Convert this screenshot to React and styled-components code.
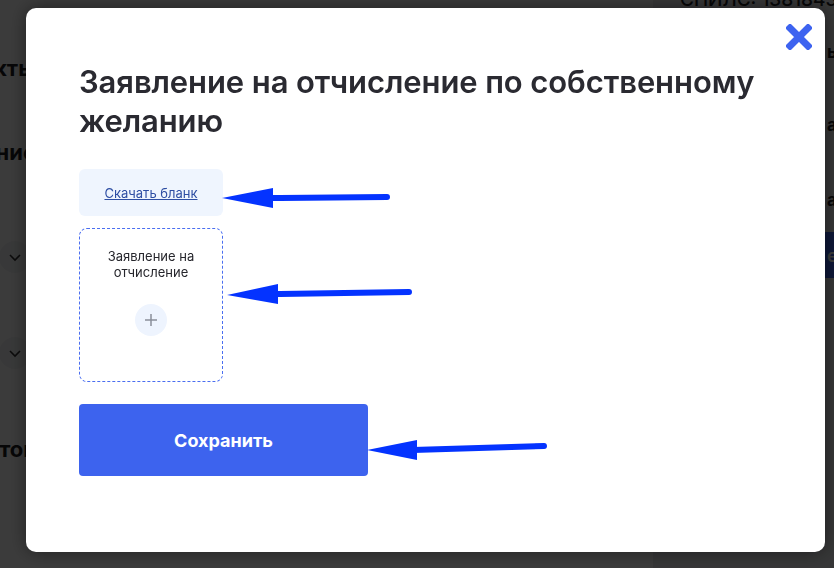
import React from "react";
import styled, { createGlobalStyle } from "styled-components";

const Global = createGlobalStyle`
  html, body { margin: 0; padding: 0; }
  body { font-family: Inter, "Noto Sans", sans-serif; background: #fff; overflow: hidden; }
  * { box-sizing: border-box; }
`;

const Page = styled.div`
  display: flex;
  width: 834px;
  height: 568px;
  overflow: hidden;
`;

const Main = styled.div`
  flex: 1;
  padding-top: 55px;
  background: #fff;
`;

const MainInner = styled.div`
  display: flex;
  flex-direction: column;
  align-items: flex-end;
  width: 36px;
`;

const BgHeading = styled.div`
  font-weight: 700;
  font-size: 22px;
  line-height: 27px;
  color: #1c1c22;
  margin-top: ${(p) => p.$mt || 0}px;
  white-space: nowrap;
`;

const BgCircle = styled.div`
  width: 32px;
  height: 32px;
  border-radius: 50%;
  background: #f2f3f5;
  display: flex;
  align-items: center;
  justify-content: center;
  margin-top: ${(p) => p.$mt || 0}px;
  margin-right: 5px;
`;

const Sidebar = styled.div`
  width: 181px;
  background: #e9eaed;
  display: flex;
  flex-direction: column;
  padding-left: 27px;
  overflow: hidden;
`;

const Snils = styled.div`
  font-size: 19px;
  line-height: 24px;
  font-weight: 500;
  color: #1c1c22;
  margin-top: -12px;
  white-space: nowrap;
`;

const SideText = styled.div`
  font-size: 17px;
  line-height: 20px;
  font-weight: 700;
  color: #1c1c22;
  margin-top: ${(p) => p.$mt}px;
  padding-left: 147px;
  white-space: nowrap;
`;

const SideBtn = styled.div`
  margin: 22px 0 0 144px;
  height: 46px;
  background: #3d63ee;
  color: #fff;
  font-size: 18px;
  font-weight: 600;
  display: flex;
  align-items: center;
  padding-left: 3px;
  white-space: nowrap;
`;

const Overlay = styled.div`
  position: fixed;
  inset: 0;
  background: rgba(0, 0, 0, 0.77);
  padding: 8px 9px 16px 26px;
  display: flex;
`;

const Modal = styled.div`
  position: relative;
  width: 799px;
  height: 544px;
  background: #fff;
  border-radius: 10px;
  box-shadow: 0 0 18px rgba(0, 0, 0, 0.45);
  padding: 54px 53px 0 53px;
  display: flex;
  flex-direction: column;
  align-items: flex-start;
`;

const CloseBtn = styled.button`
  position: absolute;
  top: 16px;
  right: 13px;
  width: 26px;
  height: 26px;
  padding: 0;
  border: none;
  background: none;
  display: flex;
  align-items: center;
  justify-content: center;
  cursor: pointer;
`;

const Title = styled.h2`
  margin: 0;
  font-family: Inter, sans-serif;
  font-size: 31px;
  line-height: 39px;
  font-weight: 600;
  color: #2a2a31;
  max-width: 700px;
  letter-spacing: -0.1px;
`;

const DownloadBox = styled.div`
  margin-top: 29px;
  width: 144px;
  height: 47px;
  background: #eff5fe;
  border-radius: 6px;
  display: flex;
  align-items: center;
  justify-content: center;
`;

const DownloadLink = styled.a`
  font-size: 13px;
  color: #2e4ea3;
  text-decoration: underline;
  cursor: pointer;
`;

const UploadBox = styled.div`
  margin-top: 12px;
  width: 144px;
  height: 154px;
  border: 1px dashed #4a6ef0;
  border-radius: 8px;
  display: flex;
  flex-direction: column;
  align-items: center;
  padding-top: 19px;
`;

const UploadLabel = styled.div`
  font-size: 13px;
  line-height: 16px;
  color: #26262c;
  text-align: center;
`;

const PlusCircle = styled.div`
  margin-top: 24px;
  width: 32px;
  height: 32px;
  border-radius: 50%;
  background: #eef4fe;
  display: flex;
  align-items: center;
  justify-content: center;
`;

const SaveButton = styled.button`
  margin-top: 22px;
  width: 289px;
  height: 72px;
  border: none;
  border-radius: 4px;
  background: #3d63ee;
  color: #fff;
  font-family: Inter, sans-serif;
  font-size: 18px;
  font-weight: 700;
  cursor: pointer;
`;

const Annotations = styled.svg`
  position: absolute;
  left: 0;
  top: 0;
  width: 799px;
  height: 544px;
  pointer-events: none;
`;

function Arrow({ tip, base, end, half }) {
  const [tx, ty] = tip;
  const [bx, by] = base;
  return (
    <g fill="#0433ff" stroke="#0433ff">
      <line x1={bx - 4} y1={by} x2={end[0]} y2={end[1]} strokeWidth="6" strokeLinecap="round" />
      <polygon points={`${tx},${ty} ${bx},${by - half} ${bx},${by + half}`} strokeWidth="0" />
    </g>
  );
}

const Chevron = () => (
  <svg width="14" height="14" viewBox="0 0 14 14">
    <path d="M2 5l5 5 5-5" fill="none" stroke="#333" strokeWidth="1.6" />
  </svg>
);

export default function App() {
  const ox = 26;
  const oy = 8;
  const p = (x, y) => [x - ox, y - oy];
  return (
    <>
      <Global />
      <Page>
        <Main>
          <MainInner>
            <BgHeading>Контакты</BgHeading>
            <BgHeading $mt={57}>Обучение</BgHeading>
            <BgCircle $mt={75}>
              <Chevron />
            </BgCircle>
            <BgCircle $mt={64}>
              <Chevron />
            </BgCircle>
            <BgHeading $mt={67}>Документов</BgHeading>
          </MainInner>
        </Main>
        <Sidebar>
          <Snils>СНИЛС: 13818436</Snils>
          <SideText $mt={30}>ы</SideText>
          <SideText $mt={53}>а</SideText>
          <SideText $mt={55}>а</SideText>
          <SideBtn>е</SideBtn>
        </Sidebar>
      </Page>
      <Overlay>
        <Modal>
          <CloseBtn aria-label="Закрыть">
            <svg width="26" height="26" viewBox="0 0 26 26">
              <path d="M4 4L22 22M22 4L4 22" stroke="#3d63f0" strokeWidth="7" strokeLinecap="square" />
            </svg>
          </CloseBtn>
          <Title>Заявление на отчисление по собственному желанию</Title>
          <DownloadBox>
            <DownloadLink>Скачать бланк</DownloadLink>
          </DownloadBox>
          <UploadBox>
            <UploadLabel>
              Заявление на
              <br />
              отчисление
            </UploadLabel>
            <PlusCircle>
              <svg width="14" height="14" viewBox="0 0 14 14">
                <path d="M7 1v12M1 7h12" stroke="#8a8e9a" strokeWidth="1.5" />
              </svg>
            </PlusCircle>
          </UploadBox>
          <SaveButton>Сохранить</SaveButton>
          <Annotations viewBox="0 0 799 544">
            <Arrow tip={p(222, 198)} base={p(273, 198)} end={p(387, 197)} half={10} />
            <Arrow tip={p(227, 295)} base={p(278, 294)} end={p(409, 292)} half={10} />
            <Arrow tip={p(367, 450)} base={p(417, 450)} end={p(544, 446)} half={10} />
          </Annotations>
        </Modal>
      </Overlay>
    </>
  );
}
